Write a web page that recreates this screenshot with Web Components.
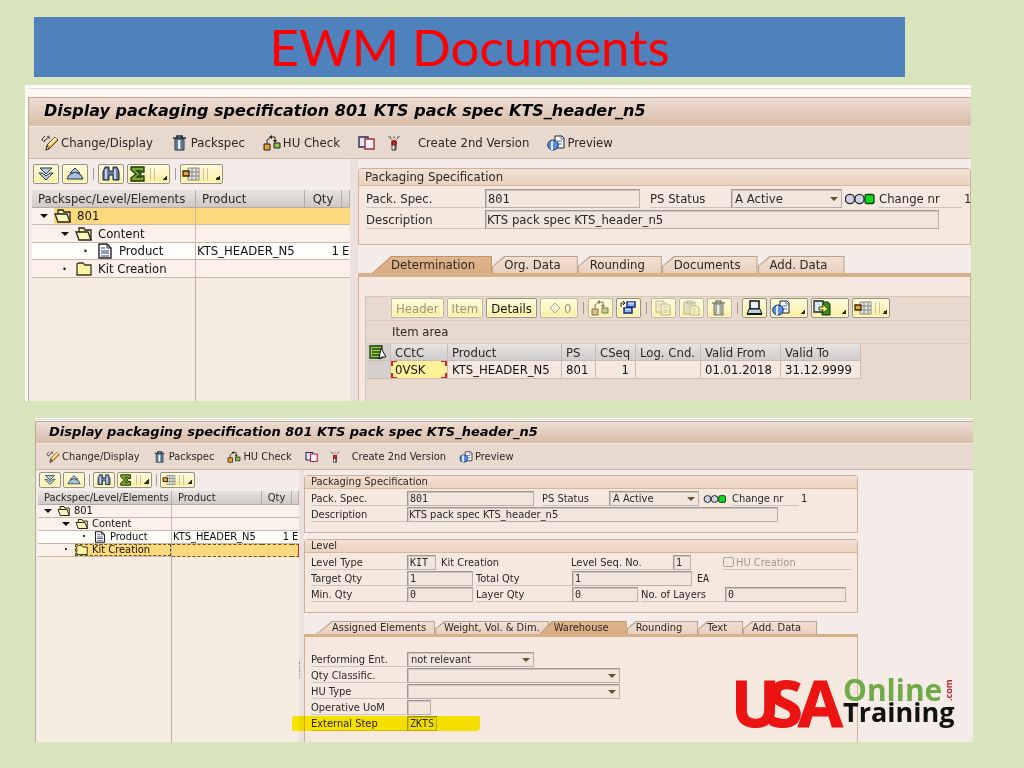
<!DOCTYPE html>
<html lang="en">
<head>
<meta charset="utf-8">
<title>EWM Documents</title>
<style>
    body {
        margin: 0;
        background: #d8e4bc;
        font-family: "DejaVu Sans Condensed", "DejaVu Sans", sans-serif;
    }
</style>
</head>
<body>
<ewm-slide>
    <slide-title slot="title">EWM Documents</slide-title>
    <sap-window heading="Display packaging specification 801 KTS pack spec KTS_header_n5">
        <sap-tree slot="tree" selected="801"></sap-tree>
        <packspec-header></packspec-header>
        <sap-tabs tabs="Determination|Org. Data|Rounding|Documents|Add. Data" active="Determination">
            <determination-view></determination-view>
        </sap-tabs>
    </sap-window>
    <sap-window compact heading="Display packaging specification 801 KTS pack spec KTS_header_n5">
        <sap-tree slot="tree" selected="Kit Creation"></sap-tree>
        <packspec-header></packspec-header>
        <level-details></level-details>
        <sap-tabs tabs="Assigned Elements|Weight, Vol. &amp; Dim.|Warehouse|Rounding|Text|Add. Data" active="Warehouse">
            <warehouse-form></warehouse-form>
        </sap-tabs>
    </sap-window>
    <training-logo slot="logo"></training-logo>
</ewm-slide>

<script>
    function attach(el, html) {
        const template = document.createElement('template');
        template.innerHTML = html;
        el.attachShadow({mode: 'open'}).appendChild(template.content.cloneNode(true));
        return el.shadowRoot;
    }

    // Every icon is drawn on an 18 x 16 canvas
    const ICONS = {
        edit: `<path d="M1 4l3-3M3 6l5-4M1 4c0 3 3 3 3 1M6 2c2-2 3 0 2 2" fill="none" stroke="#333"/>
            <path d="M5 15l1-5 8-8 3 3-8 8z" fill="#f5b045" stroke="#4b3517"/><path d="M8 10l7-7" stroke="#fff4c0" stroke-width="2"/><path d="M5 15l1-4 2 3z" fill="#fff" stroke="#333"/>`,
        trash: `<path d="M2 3h13M6 3V1h5v2" fill="none" stroke="#1e2b38" stroke-width="1.6"/>
            <path d="M4 4h9v11H4z" fill="#89a8c4" stroke="#1e2b38"/><path d="M6 5v9M11 5v9" stroke="#2d4a66"/><path d="M8 5v9" stroke="#e7f2fb" stroke-width="2"/>`,
        check: `<path d="M4 9V5l4-3h4v4" fill="none" stroke="#222"/><path d="M6 2l3-2v4zM10 5h4l-2 3z" fill="#222"/>
            <path d="M1 9h6v6H1z" fill="#ef9d31" stroke="#222"/><path d="M11 8h6v5h-6z" fill="#8cc63f" stroke="#222"/>`,
        copy: `<path d="M1 2h9v10H1z" fill="#e5e2f3" stroke="#2b2b4b" stroke-width="1.4"/><path d="M7 4h9v10H7z" fill="#f7f0fa" stroke="#a32c35" stroke-width="1.4"/>`,
        wand: `<path d="M3 1l4 4M15 1l-4 4M9 1v3M5 1l1 2M13 1l-1 2" stroke="#777"/><path d="M7 6h4v9H7z" fill="#fff" stroke="#333"/><path d="M7 6h4v4H7z" fill="#d72222" stroke="#7b1515"/><path d="M10 10v5" stroke="#222"/>`,
        preview: `<path d="M8 1h7l2 2v10H8z" fill="#f4f8ff" stroke="#222"/><path d="M14 1v3h3M10 6h5M10 9h5" fill="none" stroke="#57789d"/>
            <ellipse cx="6" cy="10" rx="5.3" ry="5" fill="#5b8ddd" stroke="#15336e"/><path d="M6 5c-2 2-2 8 0 10z" fill="#fff"/><path d="M5 6v9" stroke="#e5efff" stroke-width="2"/>`,
        down: `<path d="M3 2h12L9 8z" fill="#b9cde2" stroke="#20344d"/><path d="M2 7h3l4 3 4-3h3l-7 7z" fill="#b8cee5" stroke="#20344d"/>`,
        up: `<path d="M9 2l5 5H4z" fill="#b4cbe3" stroke="#20344d"/><path d="M3 9l6-3 6 3 2 4H1z" fill="#a9c3df" stroke="#20344d"/>`,
        find: `<path d="M3 1h4v4h4V1h4l2 5v8h-6v-5H7v5H1V6z" fill="#667a9e" stroke="#16223b"/><path d="M4 3v10M13 3v10" stroke="#c3d1ea" stroke-width="2"/>`,
        sum: `<path d="M2 1h13v5h-3V5H8l4 3-4 3h4v-1h3v5H2v-3l5-4-5-4z" fill="#7ea52c" stroke="#18350d" stroke-width="1.3"/>`,
        layout: `<path d="M6 2h11v12H6zM6 6h11M6 10h11M10 2v12M14 2v12" fill="#e4e6df" stroke="#888"/><path d="M1 5h6v5H1z" fill="#e7a33a" stroke="#3c2705" stroke-width="1.3"/>`,
        open: `<path d="M4 6V2h5l1 2h6v10" fill="#f8f0a0" stroke="#222" stroke-width="1.3"/><path d="M1 6h12l3 8H4z" fill="#fbf6b9" stroke="#222" stroke-width="1.3"/>`,
        folder: `<path d="M2 14V3l2-1h4l2 2h6v10z" fill="#fcf3a7" stroke="#3a3820" stroke-width="1.3"/>`,
        doc: `<path d="M3 1h8l4 4v10H3z" fill="#fff" stroke="#222" stroke-width="1.4"/><path d="M11 1v4h4" fill="none" stroke="#222"/><path d="M5 5h4M5 8h8M5 10h8M5 13h8" stroke="#25358a"/>`,
        lights: `<circle cx="5" cy="8" r="4.6" fill="#cfd3e6" stroke="#222" stroke-width="1.3"/><circle cx="14.5" cy="8" r="4.6" fill="#cfd3e6" stroke="#222" stroke-width="1.3"/><rect x="20" y="3.5" width="9" height="9" rx="2" fill="#0edb1c" stroke="#123d12" stroke-width="1.3"/>`,
        windows: `<path d="M8 2h8v5H8zM5 8h8v5H5z" fill="#8db6fa" stroke="#13288a" stroke-width="1.5"/><path d="M9 3h6M6 9h6" stroke="#fff"/><path d="M2 7V3h3M4 1l2 2-2 2" fill="none" stroke="#222"/>`,
        pages: `<path d="M2 1h8v11H2z" fill="#f5f0a6" stroke="#8d8b65"/><path d="M7 4h7l2 2v9H7z" fill="#fbf6a2" stroke="#8d8b65"/><path d="M9 7h5M9 10h5M9 12h5M4 4h2M4 7h2" stroke="#a7a67a"/>`,
        paste: `<path d="M2 2h11v12H2z" fill="#dcd79b" stroke="#8d8b65"/><path d="M5 1h5v3H5z" fill="#bbb" stroke="#8d8b65"/><path d="M8 6h7l2 2v7H8z" fill="#fbf6a2" stroke="#8d8b65"/><path d="M10 9h4M10 12h5" stroke="#a7a67a"/>`,
        print: `<path d="M5 1h9v8H5z" fill="#e8f1fb" stroke="#111" stroke-width="1.5"/><path d="M4 9h11l2 5H2z" fill="#b8cfe4" stroke="#111"/><path d="M2 14h15" stroke="#111" stroke-width="2"/>`,
        send: `<path d="M9 2h6l2 2v11H9z" fill="#388a28" stroke="#12320d"/><path d="M1 1h9v11H1z" fill="#dceaff" stroke="#222" stroke-width="1.3"/><path d="M6 7h4V4l5 5-5 4v-3H6z" fill="#f3f25b" stroke="#3c4b10"/>`,
        select: `<path d="M1 2h12v12H1z" fill="#9dcc44" stroke="#16360b" stroke-width="1.3"/><path d="M3 5h8M3 8h8M3 11h8" stroke="#1b4a0c" stroke-width="1.5"/><path d="M12 4l5 9h-4l-3 2z" fill="#fff" stroke="#111"/>`,
        diamond: `<path d="M9 3l5 5-5 5-5-5z" fill="#eeeeda" stroke="#77765c"/>`
    };

    customElements.define('sap-icon', class extends HTMLElement {
        constructor() {
            super();
            const name = this.getAttribute('name');
            const wide = name === 'lights';
            attach(this, `
                <style>
                    :host { display: inline-flex; flex: none; }
                    svg { display: block; height: var(--icon-h); width: var(${wide ? '--lights-w' : '--icon-w'}); }
                </style>
                <svg viewBox="0 0 ${wide ? 30 : 18} 16" aria-hidden="true">${ICONS[name]}</svg>
            `);
        }
    });

    customElements.define('ewm-slide', class extends HTMLElement {
        constructor() {
            super();
            attach(this, `
                <style>
                    :host { display: block; position: relative; padding: 17px 51px 26px 25px; }
                    main { display: flex; flex-direction: column; gap: 17px; }
                    .logo { position: absolute; right: 65px; bottom: 34px; }
                </style>
                <slot name="title"></slot>
                <main><slot></slot></main>
                <div class="logo"><slot name="logo"></slot></div>
            `);
        }
    });

    customElements.define('slide-title', class extends HTMLElement {
        constructor() {
            super();
            attach(this, `
                <style>
                    :host { display: block; margin: 0 68px 8px 9px; background: #4f81bd; }
                    h1 {
                        margin: 0;
                        color: #f00;
                        font: 400 51px/60px Lato, sans-serif;
                        text-align: center;
                    }
                </style>
                <h1><slot></slot></h1>
            `);
        }
    });

    customElements.define('sap-window', class extends HTMLElement {
        constructor() {
            super();
            const root = attach(this, `
                <style>
                    :host {
                        --fs: 13px; --mono: 12px; --title-fs: 16px; --title-h: 28px; --bar-h: 31px;
                        --icon-w: 18px; --icon-h: 16px; --lights-w: 30px;
                        --btn-h: 20px; --btn-w: 26px; --btn-wide: 43px;
                        --row: 17px; --row-alt: 18px; --field-h: 19px; --field-gap: 2px;
                        --label-w: 119px; --group-pad: 3px 0 15px 7px; --group-gap: 10px;
                        --tab-h: 17px; --slant: 12px; --tab-pad: 17px;
                        display: block;
                        margin-right: 2px;
                        padding: 3px 0 0 3px;
                        background: #fdfbf8;
                        color: #2e2722;
                        font-size: var(--fs);
                        overflow: hidden;
                    }
                    :host([compact]) {
                        --fs: 11px; --mono: 10px; --title-fs: 13px; --title-h: 21px; --bar-h: 25px;
                        --icon-w: 14px; --icon-h: 12px; --lights-w: 26px;
                        --btn-h: 16px; --btn-w: 22px; --btn-wide: 35px;
                        --row: 13px; --row-alt: 13px; --field-h: 15px; --field-gap: 1px;
                        --label-w: 96px; --group-pad: 2px 0 10px 6px; --group-gap: 8px;
                        --tab-h: 13px; --slant: 9px; --tab-pad: 16px;
                        margin: 0 0 0 10px;
                        padding: 1px 0 0;
                    }
                    .strip { height: 8px; border-top: 1px solid #e0dcda; background: #fdf6f2; }
                    :host([compact]) .strip { height: 1px; }
                    .frame { border: solid #bda99b; border-width: 1px 0 0 1px; }
                    h2 {
                        margin: 0;
                        padding-left: 15px;
                        height: var(--title-h);
                        background: linear-gradient(#eddcd0, #e2cdc0 50%, #d8bda5);
                        color: #000;
                        font: italic bold var(--title-fs)/26px "DejaVu Sans", sans-serif;
                        white-space: nowrap;
                    }
                    :host([compact]) h2 { padding-left: 13px; line-height: 20px; }
                    .bar {
                        display: flex;
                        align-items: center;
                        gap: 18px;
                        padding-left: 12px;
                        height: var(--bar-h);
                        border-top: 1px solid #f5ebe4;
                        border-bottom: 1px solid #cbb9ad;
                        background: #e8d9cf;
                    }
                    :host([compact]) .bar { gap: 13px; padding-left: 10px; }
                    .bar button {
                        display: inline-flex;
                        align-items: center;
                        gap: 2px;
                        padding: 0;
                        border: 0;
                        background: none;
                        color: inherit;
                        font: inherit;
                        white-space: nowrap;
                    }
                    .pair { display: inline-flex; gap: 9px; margin-right: -3px; }
                    .body { display: flex; background: #f5ece9; }
                    .tree { flex: none; display: flex; flex-direction: column; margin-left: 3px; width: 318px; }
                    :host([compact]) .tree { margin-left: 2px; width: 261px; }
                    .split {
                        flex: none;
                        display: flex;
                        align-items: center;
                        width: 8px;
                        background: #ebe0dc;
                    }
                    :host([compact]) .split { width: 5px; }
                    :host([compact]) .grip { margin-top: 128px; height: 16px; border-left: 1px dotted #958983; }
                    .content { flex: 1; min-width: 0; padding-top: 9px; }
                    :host([compact]) .content { flex: 0 1 554px; padding-top: 5px; }
                </style>
                <div class="strip"></div>
                <div class="frame">
                    <h2></h2>
                    <div class="bar">
                        <button><sap-icon name="edit"></sap-icon>Change/Display</button>
                        <button><sap-icon name="trash"></sap-icon>Packspec</button>
                        <button><sap-icon name="check"></sap-icon>HU Check</button>
                        <span class="pair">
                            <button aria-label="Copy"><sap-icon name="copy"></sap-icon></button>
                            <button aria-label="Simulate"><sap-icon name="wand"></sap-icon></button>
                        </span>
                        <button>Create 2nd Version</button>
                        <button><sap-icon name="preview"></sap-icon>Preview</button>
                    </div>
                    <div class="body">
                        <div class="tree"><slot name="tree"></slot></div>
                        <div class="split"><div class="grip"></div></div>
                        <div class="content"><slot></slot></div>
                    </div>
                </div>
            `);
            root.querySelector('h2').textContent = this.getAttribute('heading');
        }
    });

    customElements.define('sap-button', class extends HTMLElement {
        constructor() {
            super();
            const icon = this.getAttribute('icon');
            const menu = this.hasAttribute('menu');
            attach(this, `
                <style>
                    :host { display: inline-flex; flex: none; }
                    button {
                        display: flex;
                        align-items: center;
                        justify-content: center;
                        box-sizing: border-box;
                        height: var(--btn-h);
                        min-width: ${icon ? (menu ? 'var(--btn-wide)' : 'var(--btn-w)') : '0'};
                        padding: 0 ${icon ? '1px' : '4px'};
                        border: 1px solid #98927a;
                        border-radius: 2px;
                        box-shadow: inset 0 0 0 1px #fffbd8;
                        background: linear-gradient(#fffce0, #fbeea0);
                        color: #111;
                        font: inherit;
                    }
                    button:disabled { border-color: #bdb7a0; color: #9b957e; }
                    button:disabled sap-icon { opacity: .6; filter: saturate(.5); }
                    i {
                        align-self: flex-end;
                        margin: 0 1px 3px auto;
                        width: 5px;
                        height: 5px;
                        background: linear-gradient(135deg, transparent 50%, #2d2a10 50%);
                    }
                    b { margin-left: 3px; width: 3px; height: 70%; border: solid #c9c29c; border-width: 0 1px; }
                </style>
                <button ${this.hasAttribute('disabled') ? 'disabled' : ''} ${icon ? `aria-label="${icon}"` : ''}>
                    ${icon ? `<sap-icon name="${icon}"></sap-icon>` : ''}<slot></slot>
                    ${this.getAttribute('menu') === 'split' ? '<b></b>' : ''}${menu ? '<i></i>' : ''}
                </button>
            `);
        }
    });

    customElements.define('sap-separator', class extends HTMLElement {
        constructor() {
            super();
            attach(this, `
                <style>
                    :host { display: block; flex: none; align-self: center; margin: 0 1px 0 2px; height: 12px; border-left: 1px solid #a89b93; }
                </style>
            `);
        }
    });

    customElements.define('sap-tree', class extends HTMLElement {
        constructor() {
            super();
            const rows = [
                {text: '801', icon: 'open', level: 0, mark: '▾'},
                {text: 'Content', icon: 'open', level: 1, mark: '▾'},
                {text: 'Product', icon: 'doc', level: 2, mark: '·', cells: ['KTS_HEADER_N5', '1', 'E']},
                {text: 'Kit Creation', icon: 'folder', level: 1, mark: '·'}
            ];
            const selected = this.getAttribute('selected');
            const body = rows.map((row) => {
                const cells = row.cells || ['', '', ''];
                const on = row.text === selected;
                return `
                    <tr class="${on ? 'on' : ''} ${row.cells ? 'leaf' : ''}">
                        <td><div class="node l${row.level}">
                            <span class="mark">${row.mark === '▾' ? '<i></i>' : row.mark}</span>
                            <span class="name"><sap-icon name="${row.icon}"></sap-icon>${row.text}</span>
                        </div></td>
                        <td>${cells[0]}</td><td class="num">${cells[1]}</td><td>${cells[2]}</td>
                    </tr>`;
            }).join('');
            attach(this, `
                <style>
                    :host {
                        --c1: 164px; --c2: 109px; --c3: 37px; --indent: 21px;
                        flex: 1;
                        display: flex;
                        flex-direction: column;
                    }
                    :host([selected="Kit Creation"]) { --c1: 134px; --c2: 90px; --c3: 30px; --indent: 18px; }
                    .tools { display: flex; gap: 3px; padding: 5px 0 6px 1px; }
                    :host([selected="Kit Creation"]) .tools { gap: 2px; padding: 2px 0 3px 1px; }
                    table { table-layout: fixed; width: 100%; border-collapse: separate; border-spacing: 0; }
                    th, td {
                        box-sizing: border-box;
                        height: var(--row);
                        padding: 0 0 0 1px;
                        border: solid #cdb7a6;
                        border-width: 0 0 1px;
                        line-height: 12px;
                        white-space: nowrap;
                        overflow: hidden;
                        color: #111;
                    }
                    tr:nth-child(even) td { height: var(--row-alt); }
                    th {
                        height: calc(var(--row) + 1px);
                        padding-left: 6px;
                        border-width: 0 1px 1px 0;
                        border-color: #b5aba4;
                        background: linear-gradient(#e6e3e1, #cfcac7);
                        color: #2e2722;
                        font-weight: 400;
                        text-align: left;
                    }
                    th:nth-child(3) { text-align: center; padding: 0; }
                    td { background: #fbf1ea; }
                    .leaf td { background: #fffdfa; }
                    .on .name, .on td + td { background: #fcd97d; }
                    td:first-child { padding: 0; border-right-width: 1px; }
                    .num { padding-right: 3px; text-align: right; }
                    td:last-child { padding: 0; }
                    .node { display: flex; height: 100%; }
                    .l1 { padding-left: var(--indent); }
                    .l2 { padding-left: calc(var(--indent) * 2); }
                    .mark { flex: none; display: flex; align-items: center; justify-content: center; width: var(--indent); padding-left: 1px; font-weight: bold; }
                    i { border: solid transparent; border-top-color: #111; border-width: 4px 4px 0; }
                    .name { flex: 1; display: flex; align-items: center; gap: 5px; }
                    :host([selected="Kit Creation"]) .name { gap: 3px; }
                    :host([selected="Kit Creation"]) .on .name { outline: 1px dashed #6b5516; outline-offset: -1px; }
                    :host([selected="Kit Creation"]) .on td + td { border-top: 1px dashed #6b5516; border-bottom: 1px dashed #6b5516; }
                    :host([selected="Kit Creation"]) .on td:last-child { border-right: 1px solid #d22; }
                    .rest { flex: 1; display: flex; background: #f6ece2; }
                    .fill { width: calc(var(--c1) - 1px); border-right: 1px solid #c0aea2; }
                </style>
                <div class="tools">
                    <sap-button icon="down"></sap-button>
                    <sap-button icon="up"></sap-button>
                    <sap-separator></sap-separator>
                    <sap-button icon="find"></sap-button>
                    <sap-button icon="sum" menu="split"></sap-button>
                    <sap-separator></sap-separator>
                    <sap-button icon="layout" menu="split"></sap-button>
                </div>
                <table>
                    <colgroup><col style="width: var(--c1)"><col style="width: var(--c2)"><col style="width: var(--c3)"><col></colgroup>
                    <thead><tr><th>Packspec/Level/Elements</th><th>Product</th><th>Qty</th><th></th></tr></thead>
                    <tbody>${body}</tbody>
                </table>
                <div class="rest"><div class="fill"></div></div>
            `);
        }
    });

    customElements.define('sap-group', class extends HTMLElement {
        constructor() {
            super();
            const root = attach(this, `
                <style>
                    :host { display: block; border: 1px solid #ceb19b; border-radius: 3px 3px 0 0; background: #f5e8df; }
                    h3 {
                        margin: 0;
                        padding-left: 6px;
                        height: calc(var(--row) - 1px);
                        border-bottom: 1px solid #d8b798;
                        background: linear-gradient(#f1e1d5, #e9d2bf);
                        font-weight: 400;
                        font-size: var(--fs);
                        line-height: calc(var(--row) - 2px);
                    }
                    .rows { display: flex; flex-direction: column; gap: var(--field-gap); padding: var(--group-pad); }
                </style>
                <h3></h3>
                <div class="rows"><slot></slot></div>
            `);
            root.querySelector('h3').textContent = this.getAttribute('heading');
        }
    });

    // label + read-only control; widths come in as --label-w and --w
    customElements.define('sap-field', class extends HTMLElement {
        constructor() {
            super();
            const value = this.getAttribute('value') || '';
            const kind = this.getAttribute('kind');
            let control = `<input id="f" type="text" readonly value="${value}">`;
            if (kind === 'select') {
                control = `<span class="pick"><select id="f"><option>${value}</option></select></span>`;
            }
            if (kind === 'none') {
                control = '';
            }
            attach(this, `
                <style>
                    :host { display: inline-flex; flex: none; height: var(--field-h); }
                    label {
                        box-sizing: border-box;
                        width: var(--label-w);
                        border-bottom: 1px solid #cfc3bb;
                        line-height: var(--field-h);
                        white-space: nowrap;
                    }
                    input, select {
                        appearance: none;
                        box-sizing: border-box;
                        width: var(--w);
                        height: var(--field-h);
                        margin: 0;
                        padding: 0 1px;
                        border: 1px solid #b9aea8;
                        border-top-color: #9f9591;
                        border-left-color: #9f9591;
                        border-radius: 0;
                        box-shadow: inset 1px 1px 0 #cfc4be;
                        background: #f1e5dc;
                        color: #2e2722;
                        font: inherit;
                    }
                    select { padding-left: 3px; }
                    :host([mono]) input { padding-left: 2px; font: var(--mono) "DejaVu Sans Mono", monospace; }
                    .pick { display: grid; align-items: center; justify-items: end; }
                    .pick > *, .pick::after { grid-area: 1 / 1; }
                    .pick::after { content: ""; margin-right: 4px; border: solid transparent; border-top-color: #66522e; border-width: 4px 4px 0; pointer-events: none; }
                </style>
                <label for="f">${this.getAttribute('label')}</label>${control}
            `);
        }
    });

    customElements.define('packspec-header', class extends HTMLElement {
        constructor() {
            super();
            attach(this, `
                <style>
                    :host { display: block; --w1: 155px; --ws: 111px; --wd: 454px; --l2: 81px; --l3: 83px; }
                    :host-context([compact]) { --w1: 127px; --ws: 90px; --wd: 371px; --l2: 67px; --l3: 67px; }
                    .row { display: flex; align-items: center; white-space: nowrap; }
                    .status { margin-left: var(--group-gap); --label-w: var(--l2); --w: var(--ws); }
                    .change { --label-w: var(--l3); }
                    sap-icon { margin: 0 4px 0 3px; }
                    .nr { margin-left: 2px; }
                </style>
                <sap-group heading="Packaging Specification">
                    <div class="row">
                        <sap-field mono label="Pack. Spec." value="801" style="--w: var(--w1)"></sap-field>
                        <sap-field class="status" kind="select" label="PS Status" value="A Active"></sap-field>
                        <sap-icon name="lights"></sap-icon>
                        <sap-field class="change" kind="none" label="Change nr"></sap-field>
                        <span class="nr">1</span>
                    </div>
                    <sap-field label="Description" value="KTS pack spec KTS_header_n5" style="--w: var(--wd)"></sap-field>
                </sap-group>
            `);
        }
    });

    customElements.define('level-details', class extends HTMLElement {
        constructor() {
            super();
            attach(this, `
                <style>
                    :host { display: block; margin-top: 6px; }
                    .row { display: flex; gap: 3px; height: var(--field-h); line-height: var(--field-h); white-space: nowrap; }
                    .kit { width: 127px; padding-left: 2px; }
                    .hu {
                        flex: 1;
                        display: flex;
                        align-items: center;
                        gap: 2px;
                        margin: 0 5px 0 29px;
                        border-bottom: 1px solid #cfc3bb;
                        color: #a3978f;
                    }
                    .hu input { appearance: none; margin: 0; width: 11px; height: 10px; border: 1px solid #aaa09a; border-radius: 2px; }
                    .ea { font: var(--mono)/var(--field-h) "DejaVu Sans Mono", monospace; padding-left: 2px; }
                </style>
                <sap-group heading="Level">
                    <div class="row">
                        <sap-field mono label="Level Type" value="KIT" style="--w: 29px"></sap-field>
                        <span class="kit">Kit Creation</span>
                        <sap-field mono label="Level Seq. No." value="1" style="--label-w: 102px; --w: 18px"></sap-field>
                        <label class="hu"><input type="checkbox" disabled>HU Creation</label>
                    </div>
                    <div class="row">
                        <sap-field mono label="Target Qty" value="1" style="--w: 66px"></sap-field>
                        <sap-field mono label="Total Qty" value="1" style="--w: 120px"></sap-field>
                        <span class="ea">EA</span>
                    </div>
                    <div class="row">
                        <sap-field mono label="Min. Qty" value="0" style="--w: 66px"></sap-field>
                        <sap-field mono label="Layer Qty" value="0" style="--w: 66px"></sap-field>
                        <sap-field mono label="No. of Layers" value="0" style="--label-w: 84px; --w: 121px"></sap-field>
                    </div>
                </sap-group>
            `);
        }
    });

    customElements.define('sap-tabs', class extends HTMLElement {
        constructor() {
            super();
            const active = this.getAttribute('active');
            const tabs = this.getAttribute('tabs').split('|').map((name) =>
                `<button role="tab" aria-selected="${name === active}"><span>${name.replace('&', '&amp;')}</span></button>`
            ).join('');
            attach(this, `
                <style>
                    :host { display: block; padding-top: 11px; }
                    :host-context([compact]) { padding-top: 8px; }
                    .tabs { display: flex; padding-left: 14px; }
                    :host-context([compact]) .tabs { padding-left: 12px; }
                    button {
                        --cut: 60%;
                        --edge: #bba08a;
                        --face: linear-gradient(#f1e0d4, #e9d0bf);
                        position: relative;
                        flex: none;
                        height: var(--tab-h);
                        padding: 0 var(--tab-pad) 0 var(--slant);
                        border: 0;
                        background: none;
                        color: inherit;
                        font: inherit;
                        line-height: var(--tab-h);
                        white-space: nowrap;
                    }
                    button:first-child { --cut: 100%; --slant: 19px; }
                    :host-context([compact]) button:first-child { --slant: 16px; }
                    :host-context([compact]) button:nth-child(-n+2) { --tab-pad: 9px; }
                    button[aria-selected="true"] { --cut: 100%; --edge: #c1966d; --face: linear-gradient(#e0b58d, #d9ad84); }
                    button[aria-selected="true"]:not(:first-child) { --slant: 12px; margin-left: -9px; padding: 0 18px 0 14px; }
                    button::before, button::after {
                        content: "";
                        position: absolute;
                        inset: 0;
                        background: var(--edge);
                        clip-path: polygon(0 var(--cut), var(--slant) 0, 100% 0, 100% 100%, 0 100%);
                    }
                    button::after { inset: 1px 1px 0 1px; background: var(--face); }
                    span { position: relative; z-index: 1; }
                    .page { border: 1px solid #ceb19b; border-top: 4px solid #d8b18b; border-bottom: 0; background: #f5e8df; }
                    :host-context([compact]) .page { border-top-width: 3px; }
                </style>
                <div class="tabs" role="tablist">${tabs}</div>
                <div class="page"><slot></slot></div>
            `);
        }
    });

    customElements.define('determination-view', class extends HTMLElement {
        constructor() {
            super();
            attach(this, `
                <style>
                    :host { display: block; padding: 19px 0 0 6px; --btn-w: 25px; --btn-wide: 38px; }
                    .panel { padding-bottom: 22px; border: solid #d6c5b9; border-width: 1px 0 0 1px; background: #e8d9cf; }
                    .tools { display: flex; gap: 3px; padding: 1px 0 2px 25px; border-bottom: 1px solid #dac8bc; }
                    sap-button[icon="diamond"] { --btn-w: 38px; color: #9b957e; }
                    h4 { margin: 0; padding-left: 26px; font-weight: 400; font-size: var(--fs); line-height: 22px; border-bottom: 1px solid #dac8bc; }
                    table { margin-left: 1px; border-collapse: separate; border-spacing: 0; table-layout: fixed; width: 494px; }
                    th, td {
                        box-sizing: border-box;
                        height: 18px;
                        padding: 0 0 0 4px;
                        border: solid #c9bbb1;
                        border-width: 0 1px 1px 0;
                        font-weight: 400;
                        line-height: 15px;
                        text-align: left;
                        white-space: nowrap;
                    }
                    th { height: 17px; background: linear-gradient(#e6e3e1, #cfcdcb); }
                    td { background: #f5e8df; color: #111; }
                    th:first-child, td:first-child { padding: 0 0 0 2px; background: #d5d0cd; }
                    th sap-icon { display: flex; }
                    .num { padding: 0 6px 0 0; text-align: right; }
                    .cursor {
                        /* corner marks of the cell cursor */
                        background:
                            linear-gradient(#d2232a, #d2232a) 0 0 / 6px 1px, linear-gradient(#d2232a, #d2232a) 0 0 / 2px 5px,
                            linear-gradient(#d2232a, #d2232a) 100% 0 / 6px 1px, linear-gradient(#d2232a, #d2232a) 100% 0 / 2px 5px,
                            linear-gradient(#d2232a, #d2232a) 0 100% / 6px 1px, linear-gradient(#d2232a, #d2232a) 0 100% / 2px 5px,
                            linear-gradient(#d2232a, #d2232a) 100% 100% / 6px 1px, linear-gradient(#d2232a, #d2232a) 100% 100% / 2px 5px,
                            #fff09a;
                        background-repeat: no-repeat;
                    }
                </style>
                <div class="panel">
                    <div class="tools">
                        <sap-button disabled>Header</sap-button>
                        <sap-button disabled>Item</sap-button>
                        <sap-button>Details</sap-button>
                        <sap-button disabled icon="diamond">0</sap-button>
                        <sap-separator></sap-separator>
                        <sap-button disabled icon="check"></sap-button>
                        <sap-button icon="windows"></sap-button>
                        <sap-separator></sap-separator>
                        <sap-button disabled icon="pages"></sap-button>
                        <sap-button disabled icon="paste"></sap-button>
                        <sap-button disabled icon="trash"></sap-button>
                        <sap-separator></sap-separator>
                        <sap-button icon="print"></sap-button>
                        <sap-button icon="preview" menu></sap-button>
                        <sap-button icon="send" menu></sap-button>
                        <sap-button icon="layout" menu="split"></sap-button>
                    </div>
                    <h4>Item area</h4>
                    <table>
                        <colgroup>
                            <col style="width: 24px"><col style="width: 57px"><col style="width: 114px"><col style="width: 34px">
                            <col style="width: 40px"><col style="width: 65px"><col style="width: 80px"><col style="width: 80px">
                        </colgroup>
                        <tr>
                            <th><sap-icon name="select"></sap-icon></th><th>CCtC</th><th>Product</th><th>PS</th>
                            <th>CSeq</th><th>Log. Cnd.</th><th>Valid From</th><th>Valid To</th>
                        </tr>
                        <tr>
                            <td></td><td class="cursor">0VSK</td><td>KTS_HEADER_N5</td><td>801</td>
                            <td class="num">1</td><td></td><td>01.01.2018</td><td>31.12.9999</td>
                        </tr>
                    </table>
                </div>
            `);
        }
    });

    customElements.define('warehouse-form', class extends HTMLElement {
        constructor() {
            super();
            attach(this, `
                <style>
                    :host { display: flex; flex-direction: column; gap: var(--field-gap); padding: 15px 0 11px 6px; }
                    .marked { position: relative; align-self: flex-start; }
                    /* marker stroke runs out over the splitter on the left */
                    .marked::after {
                        content: "";
                        position: absolute;
                        inset: 0 -43px 0 -19px;
                        border-radius: 3px 2px 4px 2px;
                        background: #fff600;
                        mix-blend-mode: multiply;
                        pointer-events: none;
                    }
                </style>
                <sap-field kind="select" label="Performing Ent." value="not relevant" style="--w: 127px"></sap-field>
                <sap-field kind="select" label="Qty Classific." style="--w: 213px"></sap-field>
                <sap-field kind="select" label="HU Type" style="--w: 213px"></sap-field>
                <sap-field label="Operative UoM" style="--w: 24px"></sap-field>
                <sap-field class="marked" mono label="External Step" value="ZKTS" style="--w: 30px"></sap-field>
            `);
        }
    });

    customElements.define('training-logo', class extends HTMLElement {
        constructor() {
            super();
            attach(this, `
                <style>
                    :host { display: block; }
                    svg { display: block; overflow: visible; font-family: "Open Sans", sans-serif; font-weight: 700; }
                </style>
                <svg width="224" height="56" role="img" aria-label="USA Online Training .com">
                    <text x="-4 32 63" y="49" font-size="65" fill="#ec1313" stroke="#ec1313">USA</text>
                    <text x="108" y="23" font-size="30" fill="#70ab48">Online</text>
                    <text x="108" y="44" font-size="27" fill="#111">Training</text>
                    <text transform="translate(217 23) rotate(-90)" font-size="9" fill="#b5202c">.com</text>
                </svg>
            `);
        }
    });
</script>
</body>
</html>
